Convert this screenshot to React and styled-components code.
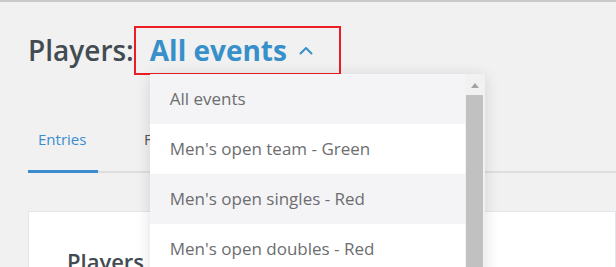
import React, { useState } from "react";
import styled, { createGlobalStyle } from "styled-components";

const GlobalStyle = createGlobalStyle`
    html, body {
        margin: 0;
        padding: 0;
        background: #f1f1f1;
        font-family: "Open Sans", Lato, sans-serif;
    }
`;

const Page = styled.div`
    height: 267px;
    overflow: hidden;
    border-top: 2px solid #c9c9c9;
    box-sizing: border-box;
    padding: 0 0 0 28px;
`;

const Header = styled.div`
    display: flex;
    align-items: center;
    height: 72px;
    padding-top: 12px;
`;

const Title = styled.h1`
    display: flex;
    align-items: center;
    margin: 0;
    font-size: 28px;
    font-weight: 600;
    color: #434b52;
`;

const Picker = styled.div`
    position: relative;
    margin-left: 0;
`;

const Trigger = styled.button`
    display: flex;
    align-items: center;
    gap: 12px;
    height: 49px;
    padding: 0 26px 0 14px;
    border: 2px solid #ee1c24;
    background: transparent;
    font: inherit;
    font-weight: 700;
    color: #3790c9;
    cursor: pointer;
`;

const Menu = styled.ul`
    position: absolute;
    top: 48px;
    left: 16px;
    width: 335px;
    margin: 0;
    padding: 0 20px 0 0;
    box-sizing: border-box;
    list-style: none;
    background: #fff;
    box-shadow: 0 2px 14px rgba(0, 0, 0, 0.13);
    z-index: 5;
`;

const Item = styled.li`
    height: 50px;
    display: flex;
    align-items: center;
    padding-left: 20px;
    font-size: 17px;
    font-weight: 400;
    color: #6d6d70;
    white-space: nowrap;
    background: ${(p) => (p.$shaded ? "#f4f4f6" : "#fff")};
`;

const Scrollbar = styled.div`
    position: absolute;
    top: 0;
    right: 0;
    bottom: 0;
    width: 20px;
    background: #f1f1f1;
    display: flex;
    flex-direction: column;
    align-items: center;
`;

const Arrow = styled.div`
    width: 0;
    height: 0;
    margin-top: 9px;
    border-left: 4px solid transparent;
    border-right: 4px solid transparent;
    border-bottom: 5px solid #a3a3a3;
`;

const Thumb = styled.div`
    margin-top: 7px;
    width: 17px;
    height: 200px;
    background: #c1c1c1;
`;

const Tabs = styled.div`
    display: flex;
    margin-top: 43px;
    border-bottom: 2px solid #dedede;
`;

const Tab = styled.div`
    padding: 0 10px 21px;
    width: 70px;
    box-sizing: border-box;
    font-size: 15px;
    color: ${(p) => (p.$active ? "#3a8ccf" : "#555")};
    border-bottom: 3px solid ${(p) => (p.$active ? "#3a8ccf" : "transparent")};
    margin-bottom: -2px;
    margin-right: ${(p) => (p.$active ? "36px" : "0")};
`;

const Card = styled.div`
    margin-top: 38px;
    height: 120px;
    background: #fff;
    border: 1px solid #e1e6ea;
    padding: 34px 0 0 38px;
`;

const CardTitle = styled.h2`
    margin: 0;
    font-size: 22px;
    font-weight: 600;
    color: #434b52;
`;

const events = [
    "All events",
    "Men's open team - Green",
    "Men's open singles - Red",
    "Men's open doubles - Red",
    "Women's open singles - Red",
];

function ChevronUp() {
    return (
        <svg width="14" height="9" viewBox="0 0 14 9" fill="none">
            <path d="M1.5 7.5 L7 2 L12.5 7.5" stroke="#3790c9" strokeWidth="2" strokeLinecap="round" strokeLinejoin="round" />
        </svg>
    );
}

export default function App() {
    const [selected] = useState("All events");

    return (
        <>
            <GlobalStyle />
            <Page>
                <Header>
                    <Title>
                        Players:
                        <Picker>
                            <Trigger>
                                {selected}
                                <ChevronUp />
                            </Trigger>
                            <Menu>
                                {events.map((name, i) => (
                                    <Item key={name} $shaded={i % 2 === 0}>
                                        {name}
                                    </Item>
                                ))}
                                <Scrollbar>
                                    <Arrow />
                                    <Thumb />
                                </Scrollbar>
                            </Menu>
                        </Picker>
                    </Title>
                </Header>
                <Tabs>
                    <Tab $active>Entries</Tab>
                    <Tab>Fixtures</Tab>
                </Tabs>
                <Card>
                    <CardTitle>Players</CardTitle>
                </Card>
            </Page>
        </>
    );
}
